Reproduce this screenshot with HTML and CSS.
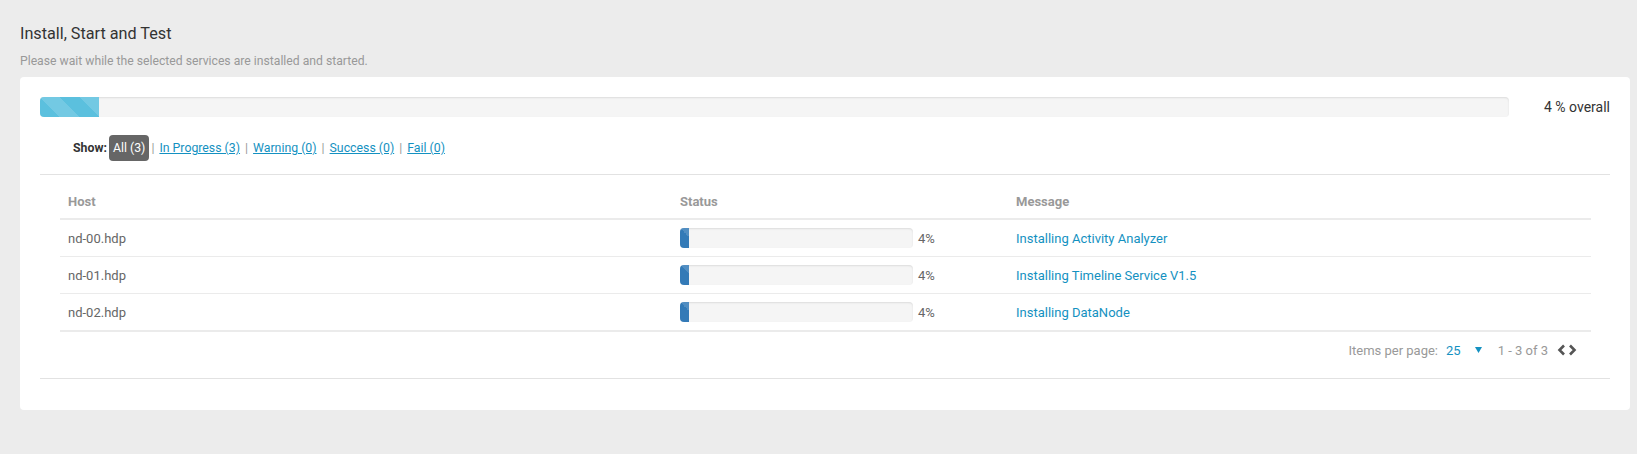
FILE: index.html
```html
<!DOCTYPE html>
<html>
<head>
<meta charset="utf-8">
<link rel="stylesheet" href="styles.css">
</head>
<body>
<div class="page">
  <h2 class="title">Install, Start and Test</h2>
  <p class="subtitle">Please wait while the selected services are installed and started.</p>
  <div class="card">
    <div class="overall">
      <div class="progress progress-lg"><div class="bar bar-info" style="width:4%"></div></div>
      <span class="overall-label">4 % overall</span>
    </div>
    <div class="filter">
      <span class="show-label">Show:</span>
      <span class="badge-active">All (3)</span>
      <span class="sep sep-first">|</span>
      <a class="flink">In Progress (3)</a>
      <span class="sep">|</span>
      <a class="flink">Warning (0)</a>
      <span class="sep">|</span>
      <a class="flink">Success (0)</a>
      <span class="sep">|</span>
      <a class="flink">Fail (0)</a>
    </div>
    <div class="box">
      <table class="hosts">
        <colgroup><col class="c-host"><col class="c-status"><col></colgroup>
        <thead>
          <tr><th>Host</th><th>Status</th><th>Message</th></tr>
        </thead>
        <tbody>
          <tr>
            <td>nd-00.hdp</td>
            <td><div class="status"><div class="progress progress-sm"><div class="bar bar-primary" style="width:4%"></div></div><span class="pct">4%</span></div></td>
            <td><a class="msg">Installing Activity Analyzer</a></td>
          </tr>
          <tr>
            <td>nd-01.hdp</td>
            <td><div class="status"><div class="progress progress-sm"><div class="bar bar-primary" style="width:4%"></div></div><span class="pct">4%</span></div></td>
            <td><a class="msg">Installing Timeline Service V1.5</a></td>
          </tr>
          <tr class="last">
            <td>nd-02.hdp</td>
            <td><div class="status"><div class="progress progress-sm"><div class="bar bar-primary" style="width:4%"></div></div><span class="pct">4%</span></div></td>
            <td><a class="msg">Installing DataNode</a></td>
          </tr>
        </tbody>
      </table>
      <div class="pager">
        <span class="ipp">Items per page:</span>
        <span class="ipp-val">25</span>
        <svg class="caret" width="7" height="6" viewBox="0 0 7 6"><polygon points="0,0 7,0 3.5,6" fill="#1491c1"/></svg>
        <span class="range">1 - 3 of 3</span>
        <span class="nav">
          <svg width="9" height="12" viewBox="0 0 9 12"><polyline points="7,1.5 2.5,6 7,10.5" fill="none" stroke="#555" stroke-width="2.6"/></svg>
          <svg width="9" height="12" viewBox="0 0 9 12"><polyline points="2,1.5 6.5,6 2,10.5" fill="none" stroke="#555" stroke-width="2.6"/></svg>
        </span>
      </div>
    </div>
  </div>
</div>
</body>
</html>
```
FILE: styles.css
```css
html, body {
  margin: 0;
  padding: 0;
  background: #ececec;
  font-family: Roboto, "Liberation Sans", Arial, sans-serif;
  color: #666;
}

.page {
  padding: 24px 7px 0 20px;
}

.title {
  margin: 0;
  font-size: 16.2px;
  line-height: 20px;
  font-weight: 400;
  color: #333;
}

.subtitle {
  margin: 9px 0 8px 0;
  font-size: 12.2px;
  line-height: 16px;
  color: #999;
}

.card {
  background: #fff;
  border-radius: 4px;
  padding: 20px 20px 31px 20px;
}

.overall {
  display: flex;
  align-items: center;
  height: 20px;
}

.progress {
  background: #f5f5f5;
  border-radius: 4px;
  box-shadow: inset 0 1px 2px rgba(0, 0, 0, 0.1);
  overflow: hidden;
}

.progress-lg {
  flex: 1;
  height: 20px;
}

.bar {
  height: 100%;
  background-image: linear-gradient(45deg, rgba(255,255,255,.15) 25%, transparent 25%, transparent 50%, rgba(255,255,255,.15) 50%, rgba(255,255,255,.15) 75%, transparent 75%, transparent);
  background-size: 40px 40px;
}

.bar-info {
  background-color: #5bc0de;
}

.bar-primary {
  background-color: #337ab7;
}

.overall-label {
  width: 101px;
  text-align: right;
  font-size: 14px;
  color: #333;
}

.filter {
  display: flex;
  align-items: center;
  height: 26px;
  margin: 18px 0 13px 0;
  padding-left: 33px;
  font-size: 12.3px;
}

.show-label {
  font-weight: 700;
  color: #333;
  margin-right: 2px;
}

.badge-active {
  display: inline-block;
  background: #666;
  color: #fff;
  border-radius: 4px;
  padding: 0 4px;
  line-height: 26px;
}

.sep {
  color: #999;
  margin: 0 5px;
}

.sep-first {
  margin-left: 2px;
}

.flink {
  color: #1491c1;
  text-decoration: underline;
}

.box {
  border-top: 1px solid #e2e2e2;
  border-bottom: 1px solid #e2e2e2;
  padding: 0 19px 0 20px;
}

.hosts {
  width: 100%;
  border-collapse: collapse;
  table-layout: fixed;
  font-size: 13px;
}

.c-host { width: 612px; }
.c-status { width: 336px; }

.hosts th {
  text-align: left;
  font-weight: 700;
  color: #999;
  height: 44px;
  padding: 0 8px 8px 8px;
  line-height: 16px;
  vertical-align: bottom;
  box-sizing: border-box;
  border-bottom: 2px solid #ebebeb;
}

.hosts td {
  height: 36px;
  padding: 0 8px;
  border-bottom: 1px solid #ebebeb;
  color: #666;
}

.hosts tr.last td {
  border-bottom: 2px solid #ebebeb;
}

.status {
  display: flex;
  align-items: center;
}

.progress-sm {
  width: 233px;
  height: 20px;
}

.pct {
  margin-left: 5px;
  color: #666;
}

.msg {
  color: #1491c1;
}

.pager {
  display: flex;
  align-items: center;
  justify-content: flex-end;
  padding: 8px 14px 18px 0;
  height: 20px;
  font-size: 13px;
  color: #999;
}

.ipp-val {
  color: #1491c1;
  margin-left: 8px;
}

.caret {
  margin-left: 14px;
}

.range {
  margin-left: 16px;
}

.nav {
  display: flex;
  align-items: center;
  margin-left: 9px;
  gap: 2px;
}

.nav svg {
  display: block;
}
```
